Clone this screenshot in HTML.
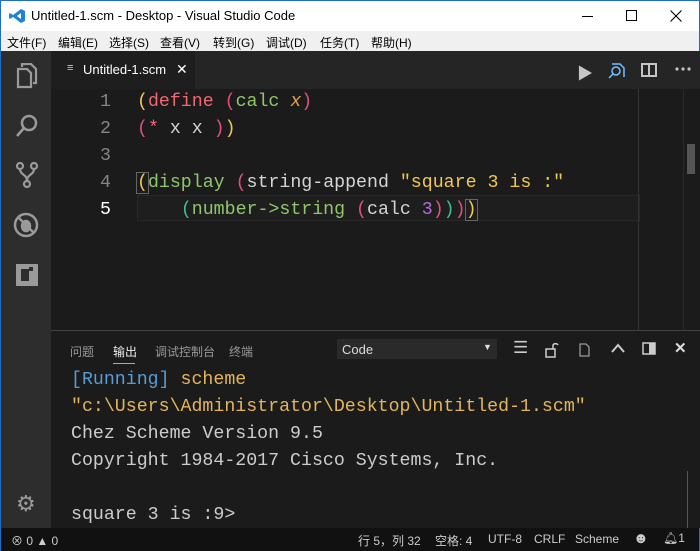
<!DOCTYPE html>
<html><head><meta charset="utf-8"><style>
*{margin:0;padding:0;box-sizing:border-box}
body{width:700px;height:551px;overflow:hidden;background:#1e1e1e;font-family:"Liberation Sans","Noto Sans CJK SC",sans-serif;position:relative}
.abs{position:absolute;white-space:nowrap}
.mono{font-family:"Liberation Mono","DejaVu Sans Mono",monospace;font-size:18.25px;white-space:pre}
#title{left:0;top:0;width:700px;height:31px;background:#fff;border-left:1px solid #1d6fc4;border-right:1px solid #1d6fc4;border-top:1px solid #1d6fc4}
#menu{left:0;top:31px;width:700px;height:20px;background:#f0f0f0;border-left:1px solid #1d6fc4;border-right:1px solid #1d6fc4;font-size:12px;color:#000}
#menu span{position:absolute;top:3px}
#act{left:0;top:51px;width:51px;height:477px;background:#2d2d2d;border-left:1px solid #1d6fc4}
#tabs{left:51px;top:51px;width:649px;height:38px;background:#252526;overflow:hidden}
#tab{left:51px;top:51px;width:144px;height:38px;background:#1e1e1e;color:#fff;font-size:13px}
#editor{left:51px;top:89px;width:649px;height:241px;background:#1b1b1b}
#panel{left:51px;top:330px;width:649px;height:198px;background:#1b1b1b;border-top:1px solid #444}
#status{left:0;top:528px;width:700px;height:23px;background:#111;color:#ccc;font-size:12px;border-left:1px solid #1d6fc4;border-right:1px solid #1d6fc4}
.ln{color:#858585;width:60px;text-align:right}
</style></head><body>
<div id="title" class="abs">
<svg class="abs" style="left:7px;top:7px" width="18" height="16" viewBox="0 0 18 16"><path d="M13 1L17 3V13L13 15L5 9L2 11L1 10V6L2 5L5 7ZM13 5L9 8L13 11Z" fill="#1f84d4"/></svg>
<span class="abs" style="left:30px;top:7px;font-size:13px;color:#000">Untitled-1.scm - Desktop - Visual Studio Code</span>
<div class="abs" style="left:581px;top:15px;width:11px;height:1px;background:#000"></div>
<div class="abs" style="left:625px;top:9px;width:11px;height:11px;border:1px solid #000"></div>
<svg class="abs" style="left:669px;top:9px" width="12" height="12" viewBox="0 0 12 12" stroke="#000" stroke-width="1.1"><path d="M0.5 0.5L11.5 11.5M11.5 0.5L0.5 11.5"/></svg>
</div>
<div id="menu" class="abs">
<span style="left:6px">文件(F)</span><span style="left:57px">编辑(E)</span><span style="left:108px">选择(S)</span><span style="left:159px">查看(V)</span><span style="left:212px">转到(G)</span><span style="left:265px">调试(D)</span><span style="left:319px">任务(T)</span><span style="left:370px">帮助(H)</span>
</div>
<div id="act" class="abs">
<svg class="abs" style="left:14px;top:12px" width="24" height="26" viewBox="0 0 24 26" fill="none" stroke="#9a9a9a" stroke-width="2.2"><path d="M7 4V1H16L21 6V20H18"/><path d="M3 6H12L16 10V24H3Z"/></svg>
<svg class="abs" style="left:14px;top:62px" width="24" height="26" viewBox="0 0 24 26" fill="none" stroke="#9a9a9a" stroke-width="2.5"><circle cx="14" cy="10" r="7"/><path d="M9 15L2 23"/></svg>
<svg class="abs" style="left:14px;top:110px" width="24" height="28" viewBox="0 0 24 28" fill="none" stroke="#9a9a9a" stroke-width="2.2"><circle cx="5" cy="5" r="3"/><circle cx="19" cy="5" r="3"/><circle cx="12" cy="23" r="3"/><path d="M5 8C5 14 12 13 12 20M19 8C19 14 12 13 12 20"/></svg>
<svg class="abs" style="left:11px;top:160px" width="28" height="28" viewBox="0 0 28 28" fill="none" stroke="#9a9a9a" stroke-width="2.5"><circle cx="14" cy="14" r="11"/><path d="M6 6L22 22"/><ellipse cx="14" cy="15" rx="4" ry="5" fill="#9a9a9a"/></svg>
<svg class="abs" style="left:14px;top:212px" width="24" height="24" viewBox="0 0 24 24"><rect x="1" y="1" width="22" height="22" fill="#9a9a9a"/><rect x="6" y="6" width="8" height="12" fill="#2d2d2d"/><rect x="14" y="4" width="4" height="4" fill="#2d2d2d"/></svg>
<span class="abs" style="left:15px;top:440px;font-size:22px;color:#9a9a9a">⚙</span>
</div>
<div id="tabs" class="abs">
<span class="abs" style="left:526px;top:9px;color:#c5c5c5;font-size:16px">▶</span>
<svg class="abs" style="left:557px;top:9px" width="18" height="20" viewBox="0 0 18 20" fill="none" stroke="#75beff" stroke-width="1.5"><path d="M4 4H12L16 8V17"/><circle cx="8" cy="11" r="4"/><path d="M5 14L1 18"/></svg>
<svg class="abs" style="left:590px;top:12px" width="16" height="14" viewBox="0 0 16 14"><rect x="1" y="1" width="14" height="12" fill="none" stroke="#c5c5c5" stroke-width="2"/><path d="M8 1V13" stroke="#c5c5c5" stroke-width="2"/></svg>
<svg class="abs" style="left:624px;top:16px" width="16" height="4" viewBox="0 0 16 4" fill="#c5c5c5"><circle cx="2" cy="2" r="1.6"/><circle cx="8" cy="2" r="1.6"/><circle cx="14" cy="2" r="1.6"/></svg>
</div>
<div id="tab" class="abs"><span class="abs" style="left:16px;top:11px;font-size:11px;color:#ccc">≡</span><span class="abs" style="left:32px;top:11px">Untitled-1.scm</span><span class="abs" style="left:125px;top:10px;font-size:14px">✕</span></div>
<div id="editor" class="abs">
<div class="abs" style="left:86px;top:106px;width:503px;height:26px;border:1px solid #282828;background:#1e1e1e"></div>
<div class="abs" style="left:587px;top:0;width:1px;height:241px;background:#333"></div>
<div class="abs" style="left:636px;top:55px;width:8px;height:30px;background:#555"></div>
<div class="abs" style="left:632px;top:0;width:1px;height:241px;background:#2a2a2a"></div>
<div class="abs mono ln" style="left:0;top:0;line-height:27px">1
2
3
4
<span style="color:#fff">5</span></div>
<div class="abs mono" style="left:86px;top:0;line-height:27px;color:#d4d4d4"><span style="color:#f1c84f">(</span><span style="color:#f06772">define</span> <span style="color:#e0507a">(</span><span style="color:#8fc66c">calc</span> <i style="color:#e5a052;font-style:italic">x</i><span style="color:#e0507a">)</span>
<span style="color:#e0507a">(</span><span style="color:#f06772">*</span> x x <span style="color:#e0507a">)</span><span style="color:#f1c84f">)</span>

<span style="color:#f1c84f;outline:1px solid #666">(</span><span style="color:#8fc66c">display</span> <span style="color:#e0507a">(</span>string-append <span style="color:#f1c84f">"square 3 is :"</span>
    <span style="color:#3fbf8f">(</span><span style="color:#8fc66c">number-&gt;string</span> <span style="color:#e0507a">(</span>calc <span style="color:#b36bdc">3</span><span style="color:#e0507a">)</span><span style="color:#3fbf8f">)</span><span style="color:#e0507a">)</span><span style="color:#f1c84f;outline:1px solid #666">)</span></div>
</div>
<div id="panel" class="abs">
<span class="abs" style="left:19px;top:12px;font-size:12px;color:#999">问题</span>
<span class="abs" style="left:62px;top:12px;font-size:12px;color:#eee">输出</span>
<div class="abs" style="left:62px;top:32px;width:22px;height:1px;background:#aaa"></div>
<span class="abs" style="left:104px;top:12px;font-size:12px;color:#999">调试控制台</span>
<span class="abs" style="left:178px;top:12px;font-size:12px;color:#999">终端</span>
<div class="abs" style="left:286px;top:8px;width:160px;height:20px;background:#2a2a2a"></div>
<span class="abs" style="left:291px;top:11px;font-size:13px;color:#ddd">Code</span>
<span class="abs" style="left:432px;top:11px;font-size:9px;color:#ddd">▼</span>
<span class="abs" style="left:462px;top:7px;font-size:17px;color:#ccc">☰</span>
<svg class="abs" style="left:494px;top:10px" width="14" height="17" viewBox="0 0 14 17" fill="none" stroke="#ccc" stroke-width="1.5"><rect x="1" y="8" width="9" height="8"/><path d="M8 8V4A3 3 0 0 1 13 4"/></svg>
<svg class="abs" style="left:526px;top:9px" width="14" height="17" viewBox="0 0 14 17" fill="none" stroke="#999" stroke-width="1.3"><path d="M3 4H9L12 7V16H3Z"/></svg>
<svg class="abs" style="left:560px;top:12px" width="14" height="10" viewBox="0 0 14 10" fill="none" stroke="#ccc" stroke-width="2"><path d="M1 9L7 2L13 9"/></svg>
<svg class="abs" style="left:591px;top:11px" width="14" height="13" viewBox="0 0 14 13"><rect x="1" y="1" width="12" height="11" fill="none" stroke="#ccc" stroke-width="1.5"/><rect x="7" y="1" width="6" height="11" fill="#ccc"/></svg>
<span class="abs" style="left:623px;top:8px;font-size:15px;color:#ddd;font-weight:bold">✕</span>
<div class="abs mono" style="left:20px;top:36px;line-height:27px;color:#ccc"><span style="color:#569cd6">[Running]</span> <span style="color:#e2b55c">scheme</span>
<span style="color:#e2b55c">"c:\Users\Administrator\Desktop\Untitled-1.scm"</span>
Chez Scheme Version 9.5
Copyright 1984-2017 Cisco Systems, Inc.

square 3 is :9&gt;</div>
<div class="abs" style="left:636px;top:140px;width:1px;height:58px;background:#555"></div>
</div>
<div id="status" class="abs">
<span class="abs" style="left:10px;top:4px">⊗ 0 ▲ 0</span>
<span class="abs" style="left:357px;top:4px">行 5，列 32</span>
<span class="abs" style="left:434px;top:4px">空格: 4</span>
<span class="abs" style="left:487px;top:4px">UTF-8</span>
<span class="abs" style="left:533px;top:4px">CRLF</span>
<span class="abs" style="left:574px;top:4px">Scheme</span>
<span class="abs" style="left:632px;top:2px;font-size:15px">☻</span>
<span class="abs" style="left:662px;top:3px">🔔︎1</span>
</div>
</body></html>
